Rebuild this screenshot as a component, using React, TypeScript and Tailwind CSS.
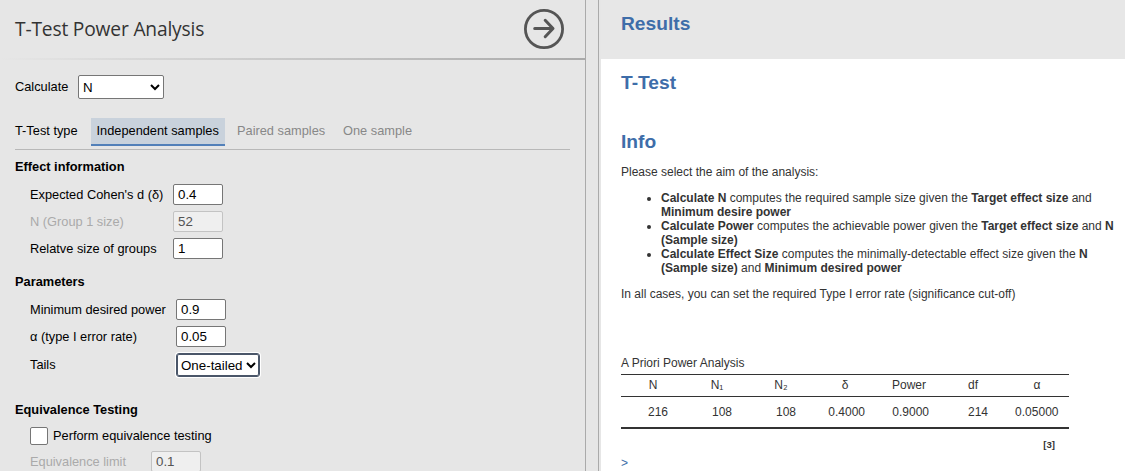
import React from "react";

type FieldProps = { label: string; value: string; labelWidth: string; disabled?: boolean };

function Field({ label, value, labelWidth, disabled }: FieldProps) {
  return (
    <div className="flex h-[27px] items-start pl-[15px]">
      <label className={`${labelWidth} shrink-0 whitespace-nowrap leading-[22px] ${disabled ? "text-[#aaaaaa]" : ""}`}>
        {label}
      </label>
      <input
        className={`h-[21px] w-[50px] rounded-[2px] border px-[4px] text-[13.333px] ${
          disabled ? "border-[#c3c3c3] bg-[#efefef] text-[#545454]" : "border-[#767676] bg-white text-black"
        }`}
        defaultValue={value}
        disabled={disabled}
      />
    </div>
  );
}

function Heading({ children }: { children: React.ReactNode }) {
  return <h2 className="h-[20px] font-bold leading-[20px]">{children}</h2>;
}

const columns = [
  { name: "N", value: "216", pad: "pr-[17px]" },
  { name: "N₁", value: "108", pad: "pr-[17px]" },
  { name: "N₂", value: "108", pad: "pr-[17px]" },
  { name: "δ", value: "0.4000", pad: "pr-[12px]" },
  { name: "Power", value: "0.9000", pad: "pr-[12px]" },
  { name: "df", value: "214", pad: "pr-[17px]" },
  { name: "α", value: "0.05000", pad: "pr-[10.5px]" },
];

function OptionsPanel() {
  return (
    <section className="flex h-full w-[586px] shrink-0 flex-col overflow-hidden border-r border-[#aaaaaa] text-[12.8px] text-black">
      <header className="flex h-[58px] shrink-0 items-center justify-between pl-[15px] pr-[21px]">
        <h1 className="font-['Open_Sans','Noto_Sans',sans-serif] text-[19.2px] tracking-[-0.17px] text-[#333333]">T-Test Power Analysis</h1>
        <svg width="40" height="40" viewBox="0 0 40 40" fill="none" stroke="#555555" strokeLinecap="round">
          <circle cx="20" cy="20" r="18.6" strokeWidth="2.8" />
          <path d="M10.7 19.5H28M21.2 11.3L29 19.5L21.2 27.7" strokeWidth="3" strokeLinejoin="round" />
        </svg>
      </header>
      <div className="h-[2px] shrink-0 bg-linear-to-r from-[#e6e6e6] to-[#aaaaaa]" />
      <div className="flex shrink-0 flex-col pl-[15px] pr-[15px]">
        <div className="mt-[15px] flex h-[24px] items-center">
          <label className="w-[63px] shrink-0">Calculate</label>
          <select className="h-[24px] w-[86px] rounded-[2px] border border-[#767676] bg-white text-[13.333px]">
            <option>N</option>
          </select>
        </div>
        <div className="mt-[19px] flex h-[32px] items-start border-b border-[#b8b8b8] leading-[26px]">
          <span className="w-[76px] shrink-0">T-Test type</span>
          <span className="h-[28px] w-[134px] border-b-2 border-[#5280b9] bg-[#c9d2dc] pl-[5.5px]">Independent samples</span>
          <span className="ml-[12px] w-[106px] text-[#888888]">Paired samples</span>
          <span className="text-[#888888]">One sample</span>
        </div>
        <div className="mt-[7px]"><Heading>Effect information</Heading></div>
        <div className="mt-[7px]">
          <Field label="Expected Cohen's d (δ)" value="0.4" labelWidth="w-[143px]" />
          <Field label="N (Group 1 size)" value="52" labelWidth="w-[143px]" disabled />
          <Field label="Relatve size of groups" value="1" labelWidth="w-[143px]" />
        </div>
        <div className="mt-[7px]"><Heading>Parameters</Heading></div>
        <div className="mt-[7px]">
          <Field label="Minimum desired power" value="0.9" labelWidth="w-[146px]" />
          <Field label="α (type I error rate)" value="0.05" labelWidth="w-[146px]" />
          <div className="flex h-[27px] items-start pl-[15px]">
            <label className="w-[146px] shrink-0 leading-[24px]">Tails</label>
            <select className="h-[24px] w-[84px] rounded-[3px] border border-[#4a5669] bg-white text-[13.333px] shadow-[inset_0_0_0_1px_#4a5669,0_0_0_1px_#ffffff]">
              <option>One-tailed</option>
            </select>
          </div>
        </div>
        <div className="mt-[20px]"><Heading>Equivalence Testing</Heading></div>
        <label className="mt-[7px] flex h-[18px] items-center pl-[15px]">
          <input type="checkbox" className="h-[18px] w-[18px] appearance-none rounded-[2px] border border-[#767676] bg-white" />
          <span className="ml-[5px]">Perform equivalence testing</span>
        </label>
        <div className="mt-[6px]">
          <Field label="Equivalence limit" value="0.1" labelWidth="w-[121px]" disabled />
        </div>
      </div>
    </section>
  );
}

function ResultsPanel() {
  return (
    <section className="flex h-full min-w-0 flex-1 flex-col border-l border-[#aaaaaa] pl-[2px] text-[12px] leading-[14px] text-[#333333]">
      <header className="h-[59px] shrink-0 bg-[#e7e7e7] pl-[20px] pt-[13px]">
        <h1 className="text-[19.2px] font-bold leading-[22px] text-[#3e6da9]">Results</h1>
      </header>
      <div className="flex-1 overflow-hidden bg-white pl-[20px] pr-[10px] pt-[13px]">
        <h2 className="text-[19.2px] font-bold leading-[22px] text-[#3e6da9]">T-Test</h2>
        <h2 className="mt-[37px] text-[19.2px] font-bold leading-[22px] text-[#3e6da9]">Info</h2>
        <p className="mt-[12px]">Please select the aim of the analysis:</p>
        <ul className="mt-[12px] list-disc pl-[40px]">
          <li><b>Calculate N</b> computes the required sample size given the <b>Target effect size</b> and <b>Minimum desire power</b></li>
          <li><b>Calculate Power</b> computes the achievable power given the <b>Target effect size</b> and <b>N (Sample size)</b></li>
          <li><b>Calculate Effect Size</b> computes the minimally-detectable effect size given the <b>N (Sample size)</b> and <b>Minimum desired power</b></li>
        </ul>
        <p className="mt-[12px]">In all cases, you can set the required Type I error rate (significance cut-off)</p>
        <table className="mt-[55px] w-[448px] table-fixed border-separate border-spacing-0">
          <caption className="h-[18px] text-left">A Priori Power Analysis</caption>
          <thead>
            <tr>
              {columns.map((c) => (
                <th key={c.name} className="h-[23px] border-y border-[#333333] p-0 pb-[2px] text-center font-normal">{c.name}</th>
              ))}
            </tr>
          </thead>
          <tbody>
            <tr>
              {columns.map((c) => (
                <td key={c.name} className={`h-[32px] border-b-2 border-[#333333] py-0 text-right ${c.pad}`}>{c.value}</td>
              ))}
            </tr>
          </tbody>
        </table>
        <div className="mt-[9px] w-[434px] text-right text-[9.6px] font-bold">[3]</div>
        <div className="mt-[4px] text-[#3e6da9]">&gt;</div>
      </div>
    </section>
  );
}

export default function App() {
  return (
    <main className="flex h-[471px] w-[1125px] overflow-hidden bg-[#e6e6e6] font-['Liberation_Sans',Arial,sans-serif]">
      <OptionsPanel />
      <div className="w-[12px] shrink-0" />
      <ResultsPanel />
    </main>
  );
}
